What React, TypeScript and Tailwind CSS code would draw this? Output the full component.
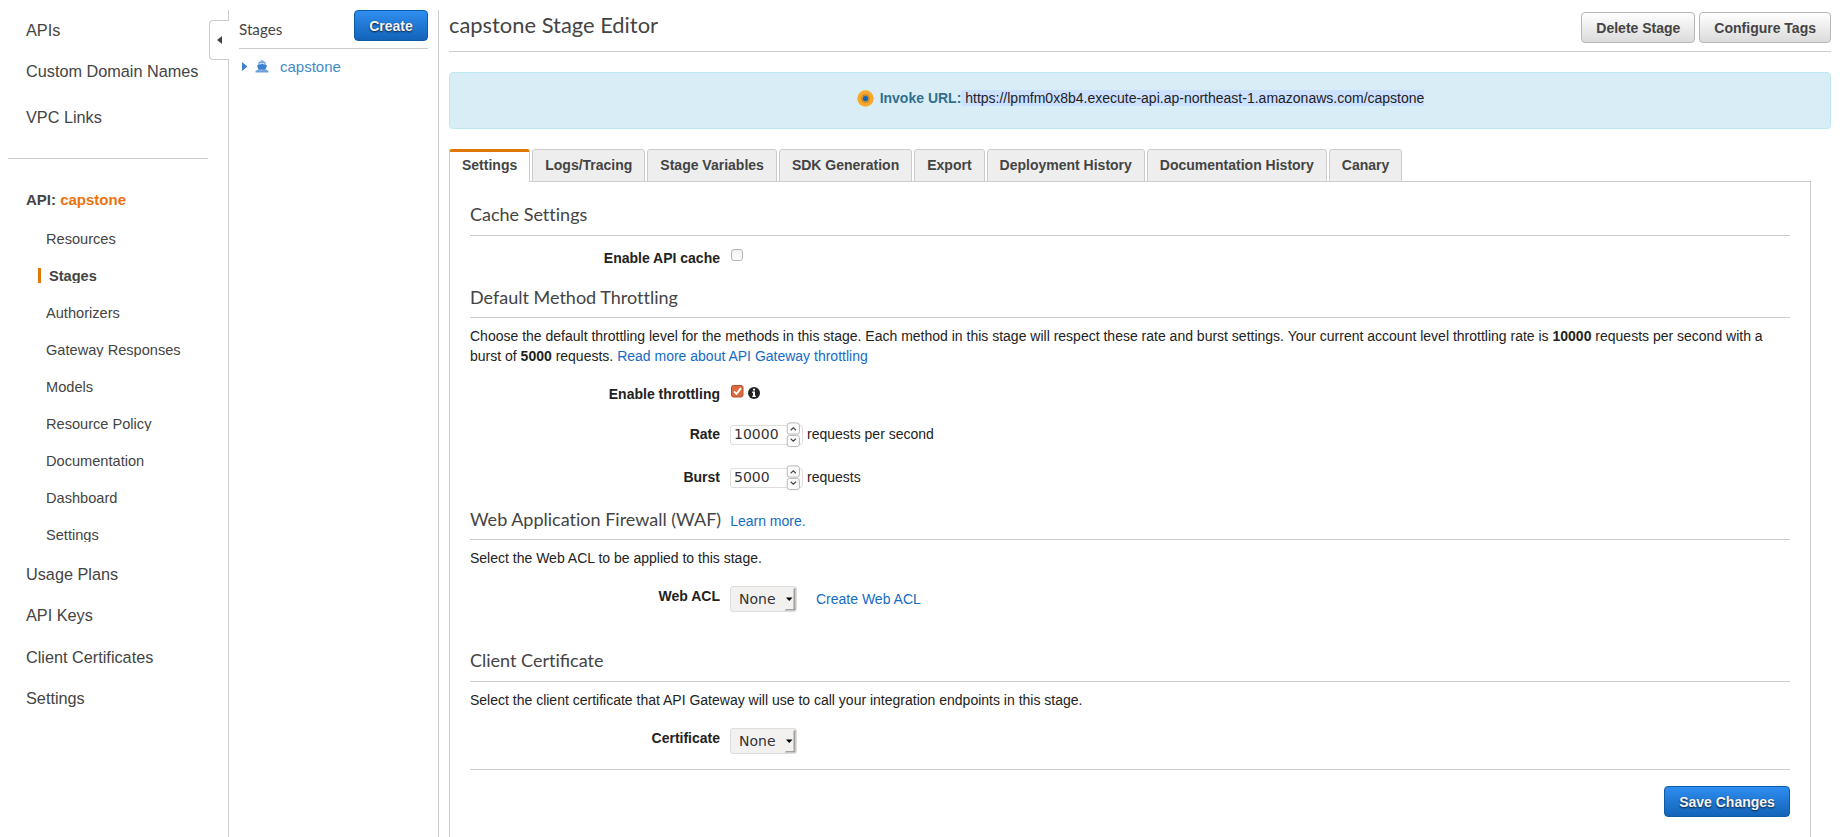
import type { ReactNode } from "react";

const topLinks = [
  { label: "APIs", cls: "mt-[20px]" },
  { label: "Custom Domain Names", cls: "mt-[21px]" },
  { label: "VPC Links", cls: "mt-[26px]" },
];
const apiLinks = ["Resources", "Stages", "Authorizers", "Gateway Responses", "Models", "Resource Policy", "Documentation", "Dashboard", "Settings"];
const bottomLinks = [
  { label: "Usage Plans", cls: "mt-[22px]" },
  { label: "API Keys", cls: "mt-[21px]" },
  { label: "Client Certificates", cls: "mt-[22px]" },
  { label: "Settings", cls: "mt-[21px]" },
];
const tabs = ["Settings", "Logs/Tracing", "Stage Variables", "SDK Generation", "Export", "Deployment History", "Documentation History", "Canary"];

function NavLink({ label, cls }: { label: string; cls: string }) {
  return <a className={`block h-5 pl-[26px] text-[16.25px] leading-5 whitespace-nowrap ${cls}`}>{label}</a>;
}

function Sidebar() {
  return (
    <nav className="w-[209px] shrink-0 text-[#444]">
      {topLinks.map((l) => (
        <NavLink key={l.label} {...l} />
      ))}
      <div className="mt-[31px] ml-2 h-px w-[200px] bg-[#ccc]" />
      <div className="mt-[31px] h-[19px] pl-[26px] text-[15px] leading-[19px] font-bold">
        API: <span className="text-[#ec7211]">capstone</span>
      </div>
      <ul className="mt-[22px] flex flex-col gap-[22px] text-[14.6px] leading-4">
        {apiLinks.map((l) =>
          l === "Stages" ? (
            <li key={l} className="ml-[38px] h-[15px] overflow-hidden border-l-[3px] border-[#e07700] pl-2 font-bold">
              {l}
            </li>
          ) : (
            <li key={l} className="ml-[46px] h-[15px] overflow-hidden">
              {l}
            </li>
          ),
        )}
      </ul>
      {bottomLinks.map((l) => (
        <NavLink key={l.label} {...l} />
      ))}
    </nav>
  );
}

function Collapser() {
  return (
    <div className="mt-[10px] flex w-5 shrink-0 flex-col">
      <div className="h-[10px] border-r border-[#ccc]" />
      <div className="flex h-10 items-center rounded-l-[4px] border border-r-0 border-[#ccc] pl-[7px]">
        <svg width="5" height="8" viewBox="0 0 5 8" fill="#444">
          <path d="M5 0v8L0 4z" />
        </svg>
      </div>
      <div className="flex-1 border-r border-[#ccc]" />
    </div>
  );
}

function BlueButton({ children, cls }: { children: ReactNode; cls: string }) {
  return (
    <button
      className={`h-[31px] rounded-[4px] border border-[#0d5aa7] bg-linear-to-b from-[#2f8df0] to-[#1264b8] text-sm font-bold text-[#f4f4f4] [text-shadow:0_1px_2px_rgba(0,0,0,0.75)] ${cls}`}
    >
      {children}
    </button>
  );
}

function GrayButton({ children }: { children: ReactNode }) {
  return (
    <button className="h-[31px] rounded-[4px] border border-[#b7b7b7] bg-linear-to-b from-white to-[#dbdbdb] px-[14px] text-sm font-bold text-[#444]">
      {children}
    </button>
  );
}

function StageList() {
  return (
    <aside className="mt-[10px] w-[210px] shrink-0 border-r border-[#ccc] px-[10px]">
      <div className="flex h-[39px] items-start justify-between border-b border-[#ccc]">
        <h2 className="mt-[10px] font-[Lato] text-[15.2px] leading-[18px] text-[#444]">Stages</h2>
        <BlueButton cls="w-[74px]">Create</BlueButton>
      </div>
      <div className="mt-2 flex h-[19px] items-start text-[15px] leading-[19px] text-[#428bca]">
        <svg width="6" height="9" viewBox="0 0 6 9" className="mt-[5px] ml-[3px]" fill="#3b82cf">
          <path d="M0 0l5.4 4.5L0 9z" />
        </svg>
        <svg width="14" height="13" viewBox="0 0 14 13" className="mt-[3px] ml-[7px]" fill="#3b82cf">
          <path d="M5.600.4h2.800v1.200H5.600z" fillOpacity=".8" />
          <path d="M3.200 5V3.600q0-2 2-2h3.600q2 0 2 2V5H9.500V3.200h-5V5z" fillOpacity=".75" />
          <path d="M2.400 5.300L7 3.700l4.600 1.600q.4.200.2.600L10.400 9.700H3.600L2.200 5.900q-.2-.4.200-.6z" />
          <path d="M.5 10.800q1.200-.1 1.800-.8 1.200-1 2.400 0 1.100.7 2.300 0 1.200-.7 2.300 0 1.200-1 2.400 0 .8.7 1.800.8v1.700H.5z" fillOpacity=".75" />
        </svg>
        <span className="ml-[11px]">capstone</span>
      </div>
    </aside>
  );
}

function Heading({ children, cls }: { children: ReactNode; cls: string }) {
  return <div className={`flex items-baseline border-b border-[#ccc] ${cls}`}>{children}</div>;
}

function H({ children }: { children: ReactNode }) {
  return <h3 className="font-[Lato] text-[18px] leading-[22px] text-[#444] [font-variant-ligatures:none]">{children}</h3>;
}

function Row({ label, cls, children }: { label: string; cls: string; children: ReactNode }) {
  return (
    <div className={`flex items-start ${cls}`}>
      <label className="mr-[10px] w-[250px] shrink-0 text-right font-bold">{label}</label>
      {children}
    </div>
  );
}

function Spinner() {
  return (
    <svg width="14" height="26" viewBox="0 0 14 26" className="-mt-[4px]">
      <g fill="#fcfcfc" stroke="#b8b8b8">
        <rect x="1.200" y=".9" width="12.200" height="11.200" rx="2.500" />
        <rect x="1.200" y="13.400" width="12.200" height="11.200" rx="2.500" />
      </g>
      <g fill="none" stroke="#444" strokeWidth="1.200">
        <path d="M4.700 8.200L7.300 5.800l2.600 2.400" />
        <path d="M4.700 16.700L7.300 19.100l2.600-2.400" />
      </g>
    </svg>
  );
}

function NumberField({ value, unit }: { value: string; unit: string }) {
  return (
    <>
      <div className="mt-px flex h-5 w-[73px] items-start justify-between rounded-[3px] border border-[#ddd] pr-[2px] pl-[3px]">
        <span className="font-['DejaVu_Sans'] text-sm leading-[17px] text-[#333]">{value}</span>
        <Spinner />
      </div>
      <span className="ml-1">{unit}</span>
    </>
  );
}

function SelectBox() {
  return (
    <div className="flex h-[26px] w-[67px] items-start justify-between rounded-[3px] border border-[#ddd] bg-[#f2f1f0] pl-2">
      <span className="font-['DejaVu_Sans'] text-sm leading-6 text-[#333]">None</span>
      <svg width="12" height="24" viewBox="0 0 12 24">
        <path d="M2 10.500h6.500L5.250 14z" fill="#000" />
        <path d="M9.500 2q1.500-1 2-1v22.500H.5l1.500-1.500h7.500z" fill="#a0a0a0" />
      </svg>
    </div>
  );
}

export default function App() {
  return (
    <div className="flex h-[837px] w-[1841px] overflow-hidden bg-white font-['Liberation_Sans',sans-serif] text-sm text-[#222]">
      <Sidebar />
      <Collapser />
      <StageList />
      <main className="mt-[10px] ml-[10px] flex w-[1382px] flex-col">
        <header className="flex h-[42px] shrink-0 items-start justify-between border-b border-[#ccc]">
          <h1 className="mt-px font-[Lato] text-[21.9px] leading-[27px] text-[#444]">capstone Stage Editor</h1>
          <div className="mt-[2px] flex gap-1">
            <GrayButton>Delete Stage</GrayButton>
            <GrayButton>Configure Tags</GrayButton>
          </div>
        </header>
        <div className="mt-5 flex h-[57px] shrink-0 items-start justify-center rounded-[4px] border border-[#bce8f1] bg-[#d9edf7] pt-[15px] pl-px leading-5">
          <svg width="17" height="17" viewBox="0 0 17 17" className="mt-[1.5px] mr-[6px]">
            <circle cx="8.500" cy="8.500" r="8.200" fill="#f9a72b" />
            <circle cx="8.500" cy="8.500" r="4.500" fill="#c98e2c" />
            <circle cx="8.500" cy="8.500" r="2.600" fill="#1166bb" />
          </svg>
          <span className="font-bold text-[#31708f]">Invoke URL:</span>
          <span className="mt-[2px] h-4 bg-[#cce0ff] leading-4 whitespace-pre text-[#222]">
            {" https://lpmfm0x8b4.execute-api.ap-northeast-1.amazonaws.com/capstone"}
          </span>
        </div>
        <div className="z-10 mt-5 -mb-px flex shrink-0 gap-[2px]">
          {tabs.map((t, i) =>
            i === 0 ? (
              <div key={t} className="h-[33px] rounded-t-[3px] border-x border-t-[3px] border-x-[#ccc] border-t-[#e07700] bg-white px-3 pt-[3px] leading-5 font-bold text-[#444]">
                {t}
              </div>
            ) : (
              <div key={t} className="h-[33px] rounded-t-[3px] border border-[#ccc] bg-[#eee] px-3 pt-[5px] leading-5 font-bold text-[#444]">
                {t}
              </div>
            ),
          )}
        </div>
        <section className="w-[1362px] flex-1 border border-b-0 border-[#ccc] px-5 leading-5">
          <Heading cls="pt-[21px] pb-[10px]">
            <H>Cache Settings</H>
          </Heading>
          <Row label="Enable API cache" cls="mt-3">
            <span className="mt-px ml-px size-3 rounded-[3px] border border-[#b5b5b5] bg-linear-to-b from-[#f0f0f0] to-white" />
          </Row>
          <Heading cls="pt-[18px] pb-[9px]">
            <H>Default Method Throttling</H>
          </Heading>
          <p className="mt-2">
            Choose the default throttling level for the methods in this stage. Each method in this stage will respect these rate and burst
            settings. Your current account level throttling rate is <b>10000</b> requests per second with a burst of <b>5000</b> requests.{" "}
            <a className="text-[#146bc6]">Read more about API Gateway throttling</a>
          </p>
          <Row label="Enable throttling" cls="mt-[18px]">
            <svg width="13" height="13" viewBox="0 0 13 13" className="mt-px ml-px">
              <rect x=".5" y=".5" width="11.500" height="11.500" rx="2" fill="#dd6a3f" stroke="#b3502c" />
              <path d="M3 6.300l2.500 2.500L10 3.200" fill="none" stroke="#fff" strokeWidth="1.900" />
            </svg>
            <svg width="12" height="12" viewBox="0 0 12 12" className="mt-[3px] ml-1">
              <circle cx="6" cy="6" r="6" fill="#222" />
              <path d="M5 1.700h2v1.800H5zM4.200 4.500H7v4.200h.9v1.400H4.200V8.700H5V5.900h-.8z" fill="#fff" />
            </svg>
          </Row>
          <Row label="Rate" cls="mt-5 h-5">
            <NumberField value="10000" unit="requests per second" />
          </Row>
          <Row label="Burst" cls="mt-[23px] h-5">
            <NumberField value="5000" unit="requests" />
          </Row>
          <Heading cls="pt-[21px] pb-[9px]">
            <H>Web Application Firewall (WAF)</H>
            <a className="ml-[9px] leading-4 text-[#146bc6]">Learn more.</a>
          </Heading>
          <p className="mt-2">Select the Web ACL to be applied to this stage.</p>
          <Row label="Web ACL" cls="mt-[18px] h-[26px]">
            <SelectBox />
            <a className="mt-[3px] ml-[19px] text-[#146bc6]">Create Web ACL</a>
          </Row>
          <Heading cls="pt-[37px] pb-[10px]">
            <H>
              Client Certi<span className="[font-variant-ligatures:normal]">fi</span>cate
            </H>
          </Heading>
          <p className="mt-2">Select the client certificate that API Gateway will use to call your integration endpoints in this stage.</p>
          <Row label="Certificate" cls="mt-[18px] h-[26px]">
            <SelectBox />
          </Row>
          <div className="mt-[15px] flex justify-end border-t border-[#ccc] pt-4">
            <BlueButton cls="w-[126px]">Save Changes</BlueButton>
          </div>
        </section>
      </main>
    </div>
  );
}
